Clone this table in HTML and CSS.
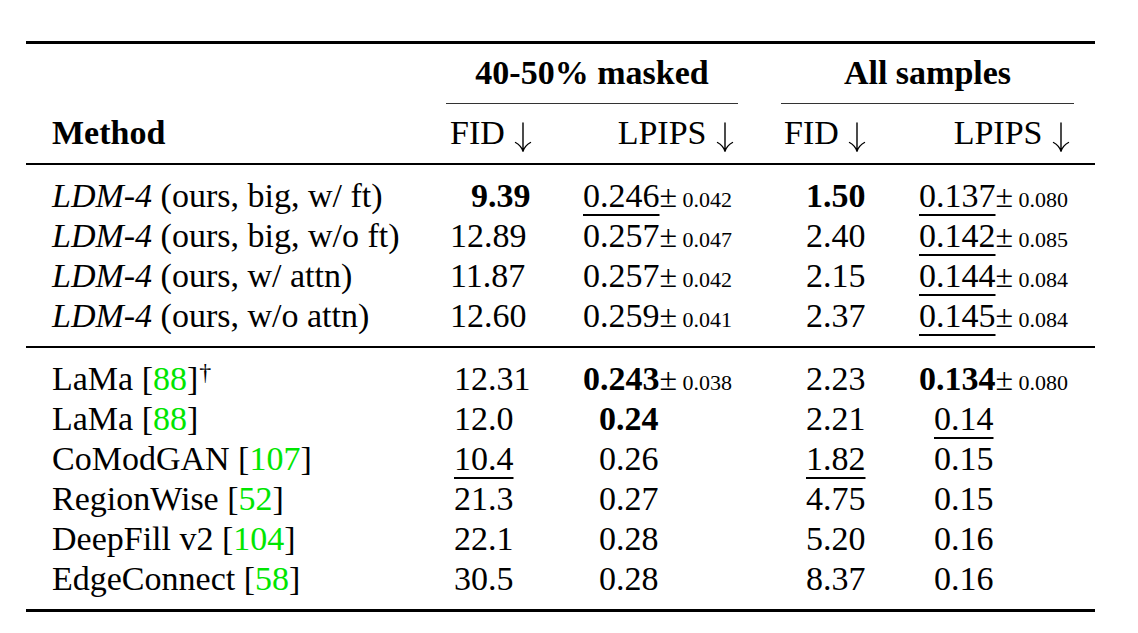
FILE: index.html
```html
<!DOCTYPE html>
<html>
<head>
<meta charset="utf-8">
<link rel="stylesheet" href="styles.css">
</head>
<body>
<div class="tbl">
  <div class="row grp">
    <div class="cell"></div>
    <div class="cell grp-h g1 b">40-50% masked</div>
    <div class="cell grp-h g2 b">All samples</div>
  </div>
  <div class="row hdr">
    <div class="cell m b">Method</div>
    <div class="cell h-fid1">FID <svg class="arr" viewBox="0 0 20 30" aria-label="↓"><path d="M10 1 V29 M2.5 20.5 Q8 23.5 10 29.2 M17.5 20.5 Q12 23.5 10 29.2"/></svg></div>
    <div class="cell h-lp">LPIPS <svg class="arr" viewBox="0 0 20 30" aria-label="↓"><path d="M10 1 V29 M2.5 20.5 Q8 23.5 10 29.2 M17.5 20.5 Q12 23.5 10 29.2"/></svg></div>
    <div class="cell"></div>
    <div class="cell h-fid2">FID <svg class="arr" viewBox="0 0 20 30" aria-label="↓"><path d="M10 1 V29 M2.5 20.5 Q8 23.5 10 29.2 M17.5 20.5 Q12 23.5 10 29.2"/></svg></div>
    <div class="cell h-lp">LPIPS <svg class="arr" viewBox="0 0 20 30" aria-label="↓"><path d="M10 1 V29 M2.5 20.5 Q8 23.5 10 29.2 M17.5 20.5 Q12 23.5 10 29.2"/></svg></div>
    <div class="cell"></div>
  </div>
  <div class="sec sec1">
    <div class="row">
      <div class="cell m"><i>LDM-4</i> (ours, big, w/ ft)</div>
      <div class="cell fid-top-b b">9.39</div>
      <div class="cell lp1"><span class="u">0.246</span><span class="pm">±</span><span class="sd"> 0.042</span></div>
      <div class="cell"></div>
      <div class="cell fid2 b">1.50</div>
      <div class="cell lp2"><span class="u">0.137</span><span class="pm">±</span><span class="sd"> 0.080</span></div>
      <div class="cell"></div>
    </div>
    <div class="row">
      <div class="cell m"><i>LDM-4</i> (ours, big, w/o ft)</div>
      <div class="cell fid-top">12.89</div>
      <div class="cell lp1">0.257<span class="pm">±</span><span class="sd"> 0.047</span></div>
      <div class="cell"></div>
      <div class="cell fid2">2.40</div>
      <div class="cell lp2"><span class="u">0.142</span><span class="pm">±</span><span class="sd"> 0.085</span></div>
      <div class="cell"></div>
    </div>
    <div class="row">
      <div class="cell m"><i>LDM-4</i> (ours, w/ attn)</div>
      <div class="cell fid-top">11.87</div>
      <div class="cell lp1">0.257<span class="pm">±</span><span class="sd"> 0.042</span></div>
      <div class="cell"></div>
      <div class="cell fid2">2.15</div>
      <div class="cell lp2"><span class="u">0.144</span><span class="pm">±</span><span class="sd"> 0.084</span></div>
      <div class="cell"></div>
    </div>
    <div class="row">
      <div class="cell m"><i>LDM-4</i> (ours, w/o attn)</div>
      <div class="cell fid-top">12.60</div>
      <div class="cell lp1">0.259<span class="pm">±</span><span class="sd"> 0.041</span></div>
      <div class="cell"></div>
      <div class="cell fid2">2.37</div>
      <div class="cell lp2"><span class="u">0.145</span><span class="pm">±</span><span class="sd"> 0.084</span></div>
      <div class="cell"></div>
    </div>
  </div>
  <div class="sec sec2">
    <div class="row">
      <div class="cell m">LaMa [<span class="cite">88</span>]<sup class="dag">†</sup></div>
      <div class="cell fid-bot">12.31</div>
      <div class="cell lp1"><b>0.243</b><span class="pm">±</span><span class="sd"> 0.038</span></div>
      <div class="cell"></div>
      <div class="cell fid2">2.23</div>
      <div class="cell lp2"><b>0.134</b><span class="pm">±</span><span class="sd"> 0.080</span></div>
      <div class="cell"></div>
    </div>
    <div class="row">
      <div class="cell m">LaMa [<span class="cite">88</span>]</div>
      <div class="cell fid-bot">12.0</div>
      <div class="cell lp1s b">0.24</div>
      <div class="cell"></div>
      <div class="cell fid2">2.21</div>
      <div class="cell lp2s"><span class="u">0.14</span></div>
      <div class="cell"></div>
    </div>
    <div class="row">
      <div class="cell m">CoModGAN [<span class="cite">107</span>]</div>
      <div class="cell fid-bot"><span class="u">10.4</span></div>
      <div class="cell lp1s">0.26</div>
      <div class="cell"></div>
      <div class="cell fid2"><span class="u">1.82</span></div>
      <div class="cell lp2s">0.15</div>
      <div class="cell"></div>
    </div>
    <div class="row">
      <div class="cell m">RegionWise [<span class="cite">52</span>]</div>
      <div class="cell fid-bot">21.3</div>
      <div class="cell lp1s">0.27</div>
      <div class="cell"></div>
      <div class="cell fid2">4.75</div>
      <div class="cell lp2s">0.15</div>
      <div class="cell"></div>
    </div>
    <div class="row">
      <div class="cell m">DeepFill v2 [<span class="cite">104</span>]</div>
      <div class="cell fid-bot">22.1</div>
      <div class="cell lp1s">0.28</div>
      <div class="cell"></div>
      <div class="cell fid2">5.20</div>
      <div class="cell lp2s">0.16</div>
      <div class="cell"></div>
    </div>
    <div class="row">
      <div class="cell m">EdgeConnect [<span class="cite">58</span>]</div>
      <div class="cell fid-bot">30.5</div>
      <div class="cell lp1s">0.28</div>
      <div class="cell"></div>
      <div class="cell fid2">8.37</div>
      <div class="cell lp2s">0.16</div>
      <div class="cell"></div>
    </div>
  </div>
</div>
</body>
</html>
```
FILE: styles.css
```css
html, body {
  margin: 0;
  padding: 0;
  background: #ffffff;
}

body {
  font-family: "Liberation Serif", "Times New Roman", serif;
  font-size: 34px;
  line-height: 40px;
  color: #000000;
}

.tbl {
  margin: 41px 0 0 26px;
  width: 1069px;
  border-top: 3px solid #000;
  border-bottom: 3px solid #000;
}

.row {
  display: grid;
  grid-template-columns: 420px 114px 178px 43px 109px 184px 21px;
  white-space: nowrap;
}

.cell {
  min-width: 0;
}

.b {
  font-weight: bold;
}

b {
  font-weight: bold;
}

i {
  font-style: italic;
}

/* group header row */
.grp {
  padding-top: 9px;
}

.grp-h {
  text-align: center;
  height: 40px;
  padding-bottom: 10px;
  border-bottom: 1.5px solid #333;
}

.g1 {
  grid-column: 2 / 4;
}

.g2 {
  grid-column: 5 / 7;
}

/* column header row */
.hdr {
  height: 40px;
  padding-top: 9px;
  padding-bottom: 10px;
  border-bottom: 2px solid #000;
}

.arr {
  width: 20px;
  height: 30px;
  vertical-align: -8px;
  fill: none;
  stroke: #000;
  stroke-width: 1.4;
  stroke-linecap: round;
}

.m {
  padding-left: 26px;
}

.h-fid1 {
  padding-left: 4px;
}

.h-fid2 {
  padding-left: 3px;
}

.h-lp {
  text-align: right;
  padding-right: 3px;
}

/* sections */
.sec {
  padding-top: 11px;
  padding-bottom: 10px;
}

.sec .row {
  height: 40px;
}

.sec1 {
  border-bottom: 2px solid #000;
}

.fid-top {
  padding-left: 4px;
}

.fid-top-b {
  padding-left: 25px;
}

.fid-bot {
  padding-left: 8px;
}

.lp1 {
  padding-left: 23px;
}

.lp1s {
  padding-left: 39px;
}

.fid2 {
  padding-left: 25px;
}

.lp2 {
  padding-left: 29px;
}

.lp2s {
  padding-left: 44px;
}

.u {
  text-decoration: underline;
  text-decoration-thickness: 1.5px;
  text-underline-offset: 7px;
}

.pm {
  font-size: 32px;
  font-weight: normal;
  line-height: 0;
}

.sd {
  font-size: 22px;
  font-weight: normal;
  line-height: 0;
}

.cite {
  color: #00e600;
}

.dag {
  font-size: 24px;
  line-height: 0;
  vertical-align: 10px;
  margin-left: 1px;
}
```
